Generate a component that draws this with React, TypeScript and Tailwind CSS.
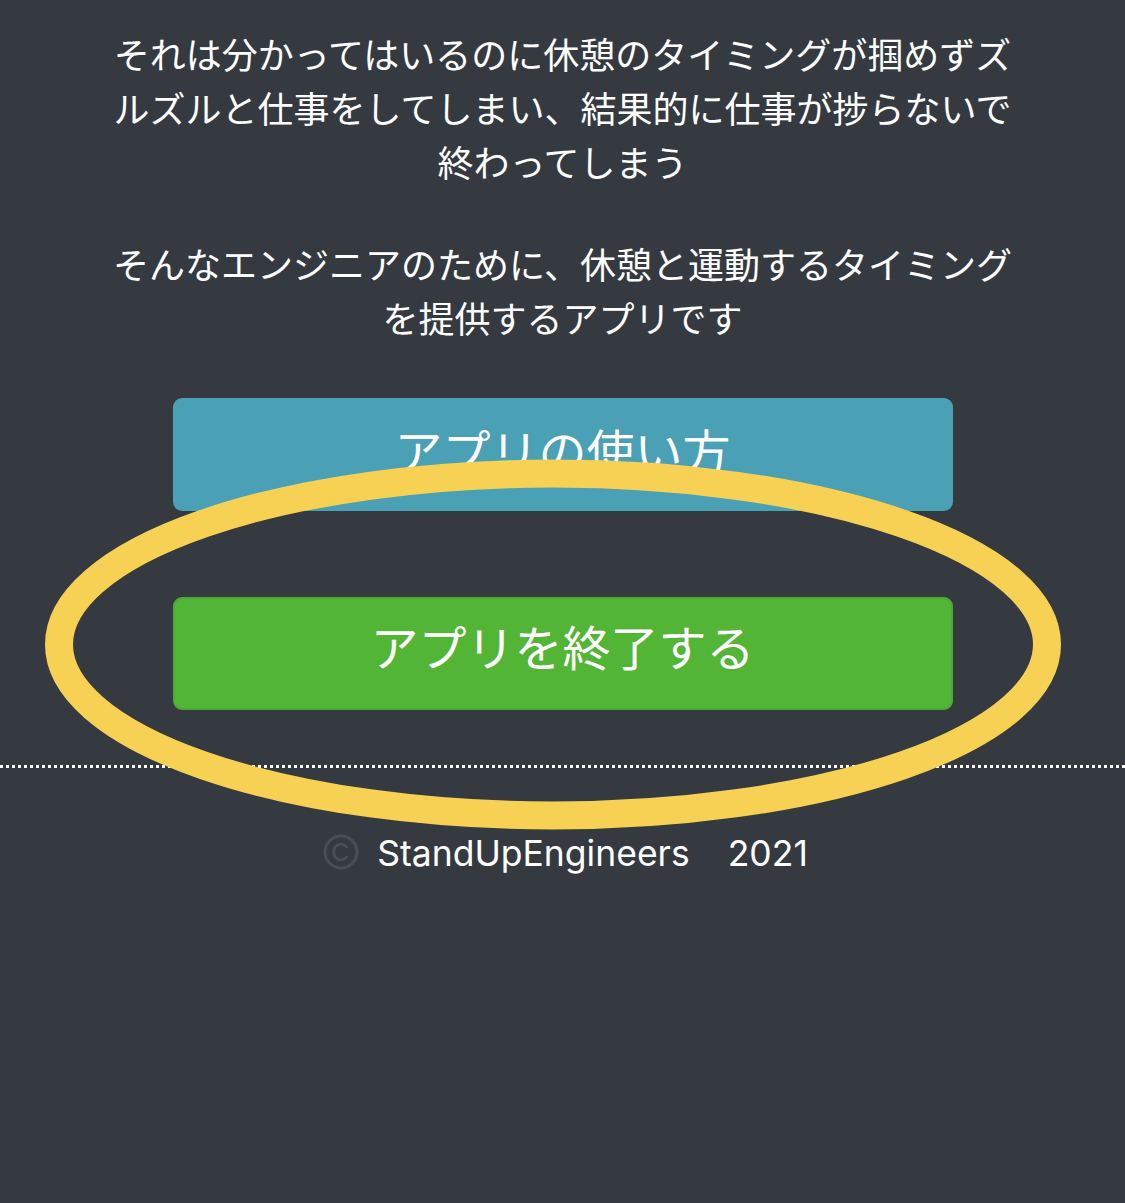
import React from "react";

const jp = { fontFamily: '"Noto Sans CJK JP", "Noto Sans", sans-serif' };

function CopyrightIcon() {
  return (
    <svg width="36" height="36" viewBox="0 0 36 36" aria-hidden="true">
      <circle cx="18" cy="18" r="16" fill="none" stroke="#4b4f53" strokeWidth="3" />
      <circle cx="18" cy="18" r="14.3" fill="none" stroke="#3c4146" strokeWidth="1" />
      <path
        d="M23.4 13 A7.2 7.8 0 1 0 23.4 23"
        fill="none"
        stroke="#4b4f53"
        strokeWidth="2.8"
        strokeLinecap="round"
      />
    </svg>
  );
}

export default function App() {
  return (
    <div className="relative min-h-[1203px] w-full overflow-hidden bg-[#343a40]">
      <div
        className="pt-[26px] text-center text-[36px] leading-[54px] text-white"
        style={jp}
      >
        <p>
          それは分かってはいるのに休憩のタイミングが掴めずズ
          <br />
          ルズルと仕事をしてしまい、結果的に仕事が捗らないで
          <br />
          終わってしまう
        </p>
        <p className="mt-[48px]">
          そんなエンジニアのために、休憩と運動するタイミング
          <br />
          を提供するアプリです
        </p>
      </div>

      <div className="mt-[54px] flex flex-col items-center gap-[86px]" style={jp}>
        <button className="flex h-[113px] w-[780px] items-center justify-center rounded-[9px] bg-[#4aa0b5] pb-[12px] text-[48px] text-white">
          アプリの使い方
        </button>
        <button className="flex h-[113px] w-[780px] items-center justify-center rounded-[9px] border-2 border-[#4da83a] bg-[#53b535] pb-[18px] text-[48px] text-white">
          アプリを終了する
        </button>
      </div>

      <div className="mt-[55px] h-[3px] w-full bg-[image:repeating-linear-gradient(90deg,#ffffff_0px,#ffffff_3px,transparent_3px,transparent_6px)]" />

      <div
        className="mt-[56px] flex h-[60px] items-center justify-center pl-[6px] text-[35.5px] text-white"
        style={{ fontFamily: 'Inter, "Liberation Sans", sans-serif' }}
      >
        <span className="mr-[18px] mt-[-4px] flex items-center">
          <CopyrightIcon />
        </span>
        <span>StandUpEngineers</span>
        <span className="ml-[38px]">2021</span>
      </div>

      <svg
        className="pointer-events-none absolute left-0 top-0"
        width="1125"
        height="1203"
        viewBox="0 0 1125 1203"
        aria-hidden="true"
      >
        <ellipse
          cx="553"
          cy="644.5"
          rx="494"
          ry="171"
          fill="none"
          stroke="#f7d154"
          strokeWidth="28"
        />
      </svg>
    </div>
  );
}
